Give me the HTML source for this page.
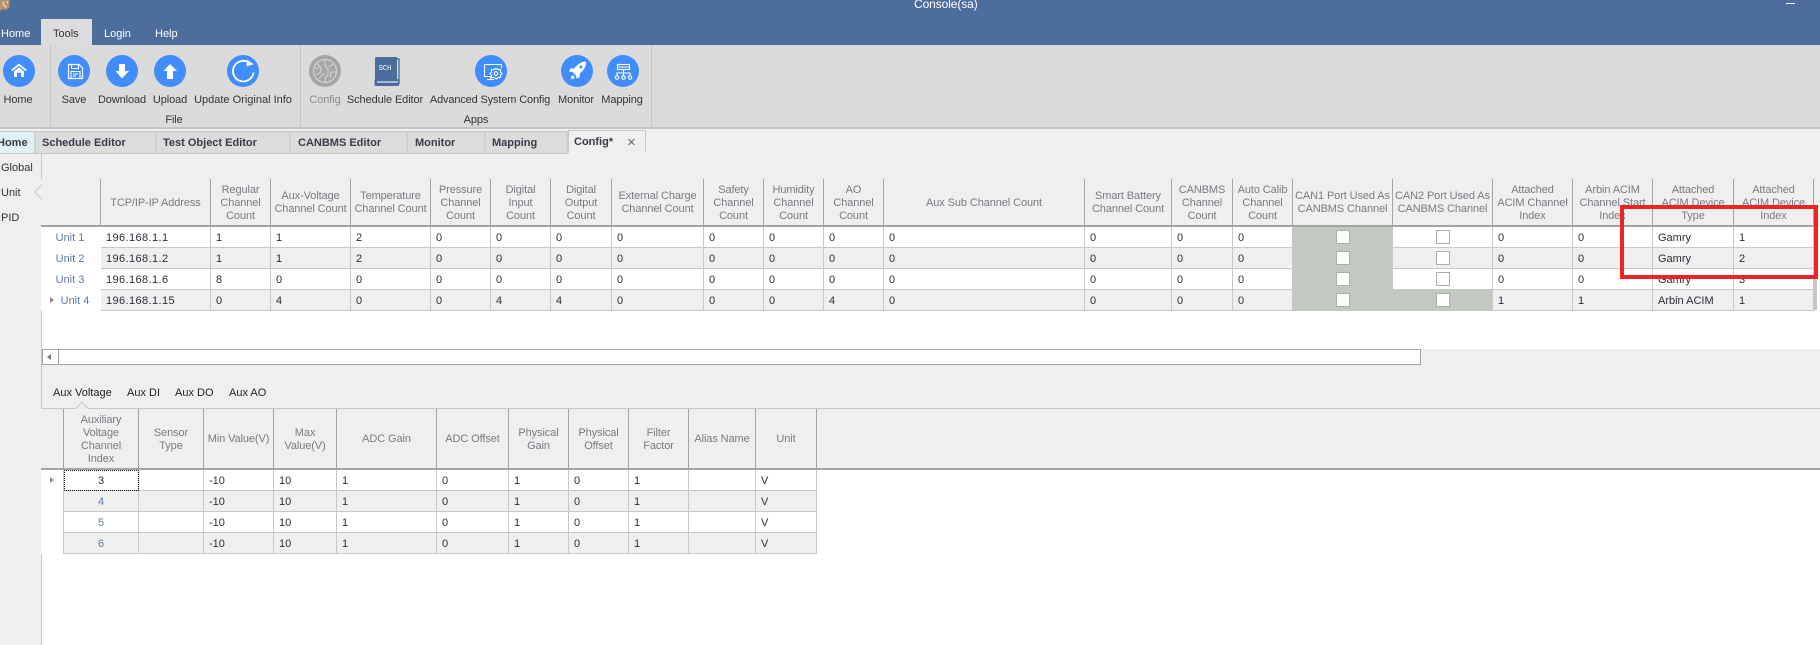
<!DOCTYPE html>
<html><head><meta charset="utf-8"><title>Console(sa)</title>
<style>
html,body{margin:0;padding:0}
body{position:relative;width:1820px;height:645px;overflow:hidden;background:#efefef;font:11px/13px "Liberation Sans",sans-serif;color:#333}
.a{position:absolute;white-space:nowrap}
.c{transform:translateX(-50%);letter-spacing:-.1px}
.tab{position:absolute;top:131px;height:21px;line-height:23px;background:#dcdcdc;border-right:2px solid #d0d0d0;border-top:1px solid #c8c8c8;font-weight:bold;color:#3a3a4a;box-sizing:content-box}
table{position:absolute;table-layout:fixed;border-collapse:separate;border-spacing:0}
th{font-weight:normal;color:#777b82;text-align:center;background:#efefef;border-right:1px solid #a3a3a3;border-bottom:2px solid #a3a3a3;padding:2px 0 0;line-height:13px;box-sizing:border-box;letter-spacing:-.1px}
td{height:21px;box-sizing:border-box;padding:2px 0 0 5px;border-right:1px solid #c8c8c8;border-bottom:1px solid #c8c8c8;background:#fff;color:#2c2c3a;white-space:nowrap;overflow:hidden}
tr.e td{background:#efefef}
td.h{border:0;background:#fff!important;color:#5d79a3;padding:2px 2px 0 0;text-align:center}
td.g{background:#c1c9c1!important}
td.k{padding:0}
td.k i{display:block;width:14px;height:14px;margin:0 auto;background:#fff;border:1px solid #adadad;box-sizing:border-box}
td.d{background-image:radial-gradient(#c4c4c4 .6px,transparent .7px)!important;background-size:2px 2px}
td.n{text-align:center;padding:2px 0 0;color:#5d79a3}
td.f{outline:1px dotted #111;outline-offset:-1px;color:#2c2c3a}
.ip td:nth-child(2){letter-spacing:.4px}
</style></head><body>
<div class="a" style="left:0;top:0;width:1820px;height:45px;background:#4d6d9d"></div>
<svg class="a" style="left:0;top:0" width="12" height="12"><path d="M0 0H10L9 5L10 7L6 10L3 9L0 11Z" fill="#b3926e"/><path d="M2 2L4 3L3 5L6 6L5 8M7 1L8 4" stroke="#e7d8bd" fill="none"/></svg>
<div class="a" style="left:914px;top:-2px;color:#fff;font-size:12px;letter-spacing:-.1px">Console(sa)</div>
<div class="a" style="left:1786px;top:3px;width:9px;height:1px;background:#fff"></div>
<div class="a" style="left:41px;top:19px;width:51px;height:26px;background:#dcdcdc"></div>
<div class="a" style="left:1px;top:28px;color:#fff">Home</div>
<div class="a" style="left:53px;top:28px;color:#333">Tools</div>
<div class="a" style="left:104px;top:28px;color:#fff">Login</div>
<div class="a" style="left:155px;top:28px;color:#fff">Help</div>

<div class="a" style="left:0;top:45px;width:1820px;height:82px;background:#dbdbdb;border-bottom:2px solid #c4c4c4"></div>
<div class="a" style="left:50px;top:45px;width:1px;height:82px;background:#c6c6c6"></div>
<div class="a" style="left:300px;top:45px;width:1px;height:82px;background:#c6c6c6"></div>
<div class="a" style="left:651px;top:45px;width:1px;height:82px;background:#c6c6c6"></div>

<svg class="a" style="left:0;top:45px;overflow:visible" width="700" height="60" viewBox="0 45 700 60">
<g fill="#418dfb">
<circle cx="19" cy="71" r="16"/><circle cx="74" cy="71" r="16"/><circle cx="122" cy="71" r="16"/><circle cx="170" cy="71" r="16"/><circle cx="243" cy="71" r="16"/><circle cx="491" cy="71" r="16"/><circle cx="577" cy="71" r="16"/><circle cx="623" cy="71" r="16"/>
</g>
<circle cx="325" cy="71" r="16" fill="#a6a6a6"/>
<path d="M19 63.5L27 70L25.5 71L19 65.7L12.5 71L11 70Z" fill="#fff"/>
<path d="M14 71.5L19 67.3L24 71.5V77H21V72.7H17V77H14Z" fill="#fff"/>
<g fill="none" stroke="#fff">
<path d="M68.5 64.5H79L82.5 68V78.5H68.5Z" stroke-width="1.2"/>
<path d="M71.5 64.5V68.5H78.5V64.5M71 71.5H80V78.5H71ZM73 74H78M73 76H76" stroke-width="1"/>
</g>
<path d="M119 64H125V71H129L122 78.5L115.5 71H119Z" fill="#fff"/>
<path d="M170 64L177 71H173V79H167V71H163.5Z" fill="#fff"/>
<path d="M253.5 72.5A10.3 10.3 0 1 1 248 62" fill="none" stroke="#fff" stroke-width="1.8"/>
<path d="M246.5 60L254 63.5L247 66.5Z" fill="#fff" transform="rotate(8 249 63)"/>
<g fill="none" stroke="#d9d9d9" stroke-width="1">
<circle cx="325" cy="71" r="11.5"/>
<path d="M317 63.5L321 68V72L316 75M325 60V66L328 69V75L325 78V82M333 64L329 67M336 72H331L330 78M319 79L322 75L325 74M314.5 68H319"/>
</g>
<path d="M376 57H397V80H378C375.500 80 375 82 375 83V59C375 58 375.500 57 376 57Z" fill="#4a6d9c"/>
<path d="M397 59H399V84" fill="none" stroke="#4a6d9c" stroke-width="1.400"/>
<rect x="374.500" y="79" width="24.500" height="7" rx="1" fill="#4a6d9c"/>
<rect x="377" y="81" width="21" height="2" fill="#a9b9ce"/>
<text x="385" y="70" fill="#fff" font-size="7" text-anchor="middle" font-family="Liberation Mono,monospace">SCH</text>
<g fill="none" stroke="#fff" stroke-width="1.100">
<path d="M491 76.500H484.500V64.500H501.500V68"/>
<path d="M487 79.500H494M491 76.500V79.500"/>
<path d="M496 68.500L498 69.500L500.500 69.500L500.500 72L502 73.500L500.500 75L500.500 77.500L498 77.500L496 79L494 77.500L491.500 77.500L491.500 75L490 73.500L491.500 72L491.500 69.500L494 69.500Z" fill="#418dfb"/>
<circle cx="496" cy="73.500" r="1.800"/>
</g>
<path d="M586 61.500C586.500 66 584 70 580 73.500L579.500 77.500L576.500 78.500L576 75.500L572.500 72L569 71.500L570.500 68.500L574 68.500C577.500 64.500 581.500 61.500 586 61.500Z" fill="#fff"/>
<path d="M571 76L574 75.500L574.500 78L571.500 79.500Z" fill="#fff"/>
<circle cx="581" cy="67" r="1.500" fill="#418dfb"/>
<g fill="none" stroke="#fff" stroke-width="1.100">
<rect x="617.500" y="64.500" width="12" height="5"/>
<path d="M617.500 67H629.500M623.500 69.500V73M617 76V73H630V76M623.500 73V76"/>
<circle cx="617" cy="77.500" r="1.700"/><circle cx="623.500" cy="77.500" r="1.700"/><circle cx="630" cy="77.500" r="1.700"/>
</g>
</svg>

<div class="a c" style="left:18px;top:94px">Home</div>
<div class="a c" style="left:74px;top:94px">Save</div>
<div class="a c" style="left:122px;top:94px">Download</div>
<div class="a c" style="left:170px;top:94px">Upload</div>
<div class="a c" style="left:243px;top:94px;letter-spacing:0">Update Original Info</div>
<div class="a c" style="left:174px;top:114px">File</div>
<div class="a c" style="left:325px;top:94px;color:#8a8a8a">Config</div>
<div class="a c" style="left:385px;top:94px">Schedule Editor</div>
<div class="a c" style="left:490px;top:94px;letter-spacing:-.15px">Advanced System Config</div>
<div class="a c" style="left:576px;top:94px">Monitor</div>
<div class="a c" style="left:622px;top:94px">Mapping</div>
<div class="a c" style="left:476px;top:114px">Apps</div>

<div class="tab" style="left:0;width:34px;background:#dff2f6;text-indent:-3px;overflow:hidden">Home</div>
<div class="tab" style="left:36px;width:119px;text-indent:6px">Schedule Editor</div>
<div class="tab" style="left:157px;width:132px;text-indent:6px">Test Object Editor</div>
<div class="tab" style="left:291px;width:115px;text-indent:7px">CANBMS Editor</div>
<div class="tab" style="left:408px;width:76px;text-indent:7px">Monitor</div>
<div class="tab" style="left:486px;width:80px;text-indent:6px">Mapping</div>
<div class="tab" style="left:568px;width:76px;height:22px;background:#efefef;text-indent:5px;border:1px solid #c8c8c8;border-bottom:0;top:130px">Config*<span style="position:absolute;left:58px;top:0;font-weight:normal;font-size:15px;color:#666;text-indent:0">×</span></div>
<div class="a" style="left:0;top:153px;width:568px;height:1px;background:#c8c8c8"></div>

<div class="a" style="left:1px;top:162px">Global</div>
<div class="a" style="left:1px;top:187px">Unit</div>
<div class="a" style="left:1px;top:212px">PID</div>
<div class="a" style="left:41px;top:154px;width:1px;height:491px;background:#c8c8c8"></div>
<svg class="a" style="left:34px;top:184px" width="9" height="16"><path d="M7.500 0.500L1 8L7.500 15.500" fill="#efefef" stroke="#c8c8c8"/></svg>

<div class="a" style="left:42px;top:227px;width:1778px;height:122px;background:#fff"></div>
<table class="ip" style="left:41px;top:179px;width:1773px">
<colgroup><col style="width:60px"><col style="width:110px"><col style="width:60px"><col style="width:80px"><col style="width:80px"><col style="width:60px"><col style="width:60px"><col style="width:61px"><col style="width:92px"><col style="width:60px"><col style="width:60px"><col style="width:60px"><col style="width:201px"><col style="width:87px"><col style="width:61px"><col style="width:60px"><col style="width:100px"><col style="width:100px"><col style="width:80px"><col style="width:80px"><col style="width:81px"><col style="width:80px"></colgroup>
<tr style="height:48px"><th></th><th>TCP/IP-IP Address</th><th>Regular<br>Channel<br>Count</th><th>Aux-Voltage<br>Channel Count</th><th>Temperature<br>Channel Count</th><th>Pressure<br>Channel<br>Count</th><th>Digital<br>Input<br>Count</th><th>Digital<br>Output<br>Count</th><th>External Charge<br>Channel Count</th><th>Safety<br>Channel<br>Count</th><th>Humidity<br>Channel<br>Count</th><th>AO<br>Channel<br>Count</th><th>Aux Sub Channel Count</th><th>Smart Battery<br>Channel Count</th><th>CANBMS<br>Channel<br>Count</th><th>Auto Calib<br>Channel<br>Count</th><th>CAN1 Port Used As<br>CANBMS Channel</th><th>CAN2 Port Used As<br>CANBMS Channel</th><th>Attached<br>ACIM Channel<br>Index</th><th>Arbin ACIM<br>Channel Start<br>Index</th><th>Attached<br>ACIM Device<br>Type</th><th>Attached<br>ACIM Device<br>Index</th></tr>
<tr><td class="h">Unit 1</td><td>196.168.1.1</td><td>1</td><td>1</td><td>2</td><td>0</td><td>0</td><td>0</td><td>0</td><td>0</td><td>0</td><td>0</td><td>0</td><td>0</td><td>0</td><td>0</td><td class="k g"><i></i></td><td class="k"><i></i></td><td>0</td><td>0</td><td>Gamry</td><td>1</td></tr>
<tr class="e"><td class="h">Unit 2</td><td>196.168.1.2</td><td>1</td><td>1</td><td>2</td><td>0</td><td>0</td><td>0</td><td>0</td><td>0</td><td>0</td><td>0</td><td>0</td><td>0</td><td>0</td><td>0</td><td class="k g"><i></i></td><td class="k"><i></i></td><td>0</td><td>0</td><td>Gamry</td><td>2</td></tr>
<tr><td class="h">Unit 3</td><td>196.168.1.6</td><td>8</td><td>0</td><td>0</td><td>0</td><td>0</td><td>0</td><td>0</td><td>0</td><td>0</td><td>0</td><td>0</td><td>0</td><td>0</td><td>0</td><td class="k g"><i></i></td><td class="k"><i></i></td><td>0</td><td>0</td><td>Gamry</td><td>3</td></tr>
<tr class="e"><td class="h" style="padding-left:10px">Unit 4</td><td>196.168.1.15</td><td>0</td><td>4</td><td>0</td><td>0</td><td>4</td><td>4</td><td>0</td><td>0</td><td>0</td><td>4</td><td>0</td><td>0</td><td>0</td><td>0</td><td class="k g"><i></i></td><td class="k g"><i></i></td><td>1</td><td>1</td><td>Arbin ACIM</td><td class="d">1</td></tr>
</table>
<div class="a" style="left:1813px;top:227px;width:4px;height:83px;background:#c1c9c1"></div>
<div class="a" style="left:50px;top:297px;width:0;height:0;border-left:4px solid #888;border-top:3px solid transparent;border-bottom:3px solid transparent"></div>

<div class="a" style="left:42px;top:349px;width:1377px;height:14px;background:#fff;border:1px solid #a3a3a3"></div>
<div class="a" style="left:58px;top:350px;width:1px;height:14px;background:#a3a3a3"></div>
<div class="a" style="left:47px;top:354px;width:0;height:0;border-right:4px solid #777;border-top:3px solid transparent;border-bottom:3px solid transparent"></div>

<div class="a" style="left:53px;top:387px;color:#222">Aux Voltage</div>
<div class="a" style="left:127px;top:387px;color:#222">Aux DI</div>
<div class="a" style="left:175px;top:387px;color:#222">Aux DO</div>
<div class="a" style="left:229px;top:387px;color:#222">Aux AO</div>

<div class="a" style="left:42px;top:408px;width:1778px;height:1px;background:#c8c8c8"></div>
<div class="a" style="left:42px;top:470px;width:1778px;height:175px;background:#fff"></div>
<div class="a" style="left:817px;top:409px;width:1003px;height:61px;background:#efefef;border-bottom:2px solid #a3a3a3;box-sizing:border-box"></div>
<svg class="a" style="left:75px;top:401px" width="14" height="9"><path d="M0.500 8L7 1L13.500 8" fill="#efefef" stroke="#c8c8c8"/><path d="M1 8H13V9H1Z" fill="#efefef"/></svg>

<table style="left:41px;top:409px;width:776px">
<colgroup><col style="width:23px"><col style="width:75px"><col style="width:65px"><col style="width:70px"><col style="width:63px"><col style="width:100px"><col style="width:72px"><col style="width:60px"><col style="width:60px"><col style="width:60px"><col style="width:67px"><col style="width:61px"></colgroup>
<tr style="height:61px"><th></th><th>Auxiliary<br>Voltage<br>Channel<br>Index</th><th>Sensor<br>Type</th><th>Min Value(V)</th><th>Max<br>Value(V)</th><th>ADC Gain</th><th>ADC Offset</th><th>Physical<br>Gain</th><th>Physical<br>Offset</th><th>Filter<br>Factor</th><th>Alias Name</th><th>Unit</th></tr>
<tr><td class="h" style="border-right:1px solid #c8c8c8"></td><td class="n f">3</td><td></td><td>-10</td><td>10</td><td>1</td><td>0</td><td>1</td><td>0</td><td>1</td><td></td><td>V</td></tr>
<tr class="e"><td class="h" style="border-right:1px solid #c8c8c8"></td><td class="n">4</td><td></td><td>-10</td><td>10</td><td>1</td><td>0</td><td>1</td><td>0</td><td>1</td><td></td><td>V</td></tr>
<tr><td class="h" style="border-right:1px solid #c8c8c8"></td><td class="n">5</td><td></td><td>-10</td><td>10</td><td>1</td><td>0</td><td>1</td><td>0</td><td>1</td><td></td><td>V</td></tr>
<tr class="e"><td class="h" style="border-right:1px solid #c8c8c8"></td><td class="n">6</td><td></td><td>-10</td><td>10</td><td>1</td><td>0</td><td>1</td><td>0</td><td>1</td><td></td><td>V</td></tr>
</table>
<div class="a" style="left:50px;top:477px;width:0;height:0;border-left:4px solid #888;border-top:3px solid transparent;border-bottom:3px solid transparent"></div>

<div class="a" style="left:1620px;top:205px;width:198px;height:74px;border:4px solid #ec2327;box-sizing:border-box"></div>
</body></html>
